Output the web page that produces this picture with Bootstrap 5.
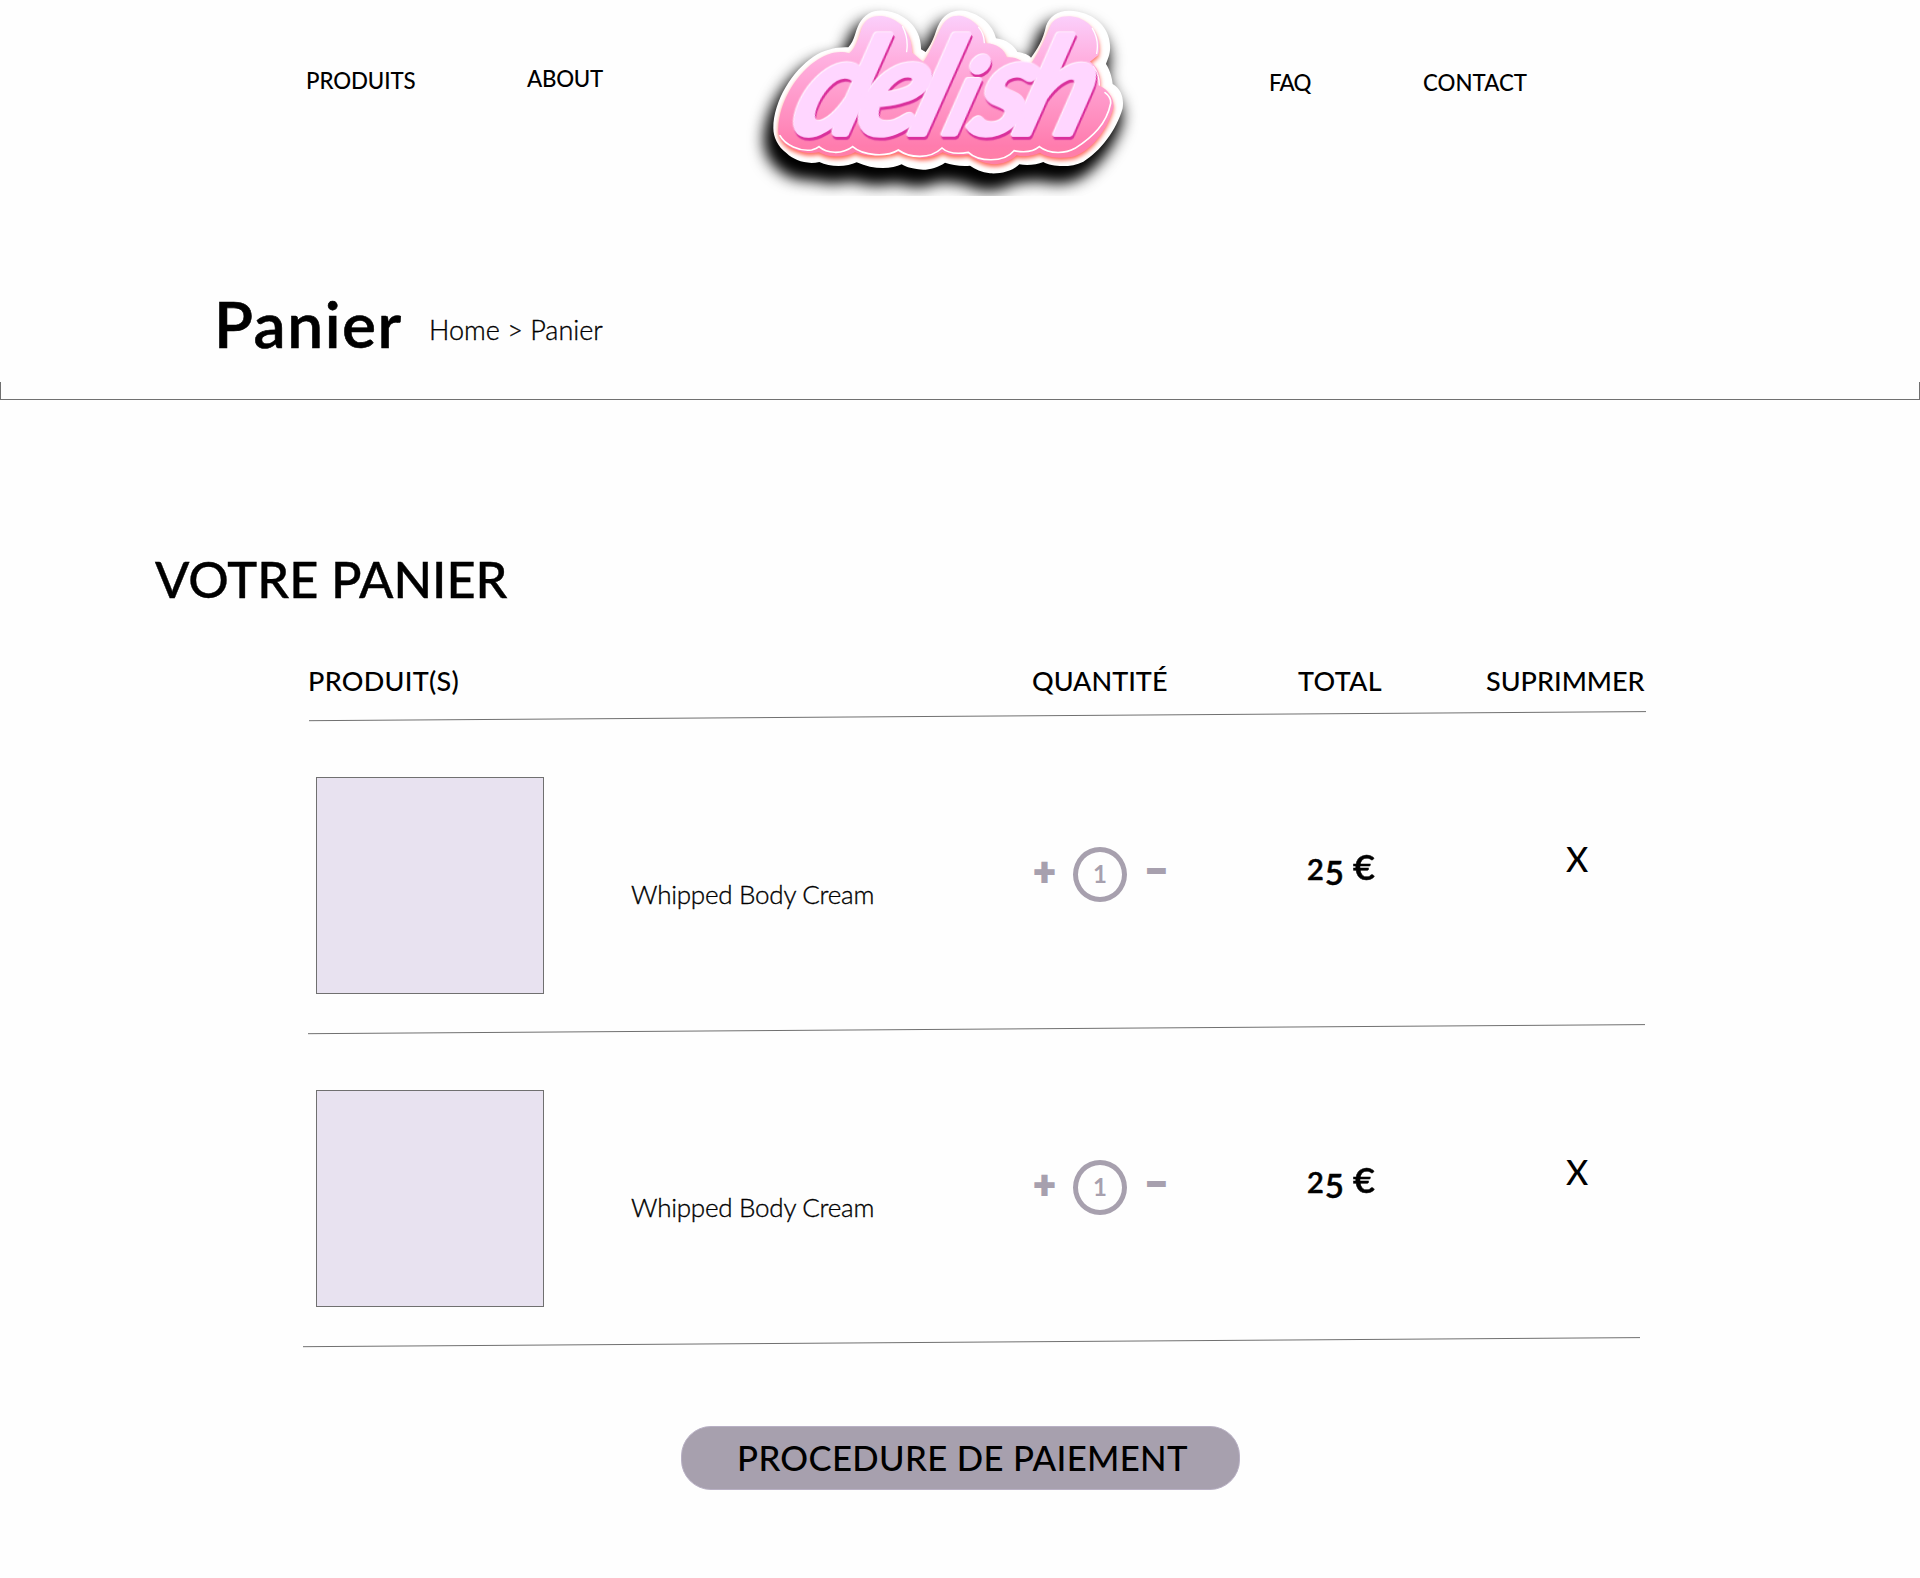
<!DOCTYPE html>
<html lang="fr">
<head>
<meta charset="utf-8">
<meta name="viewport" content="width=device-width, initial-scale=1">
<title>Delish – Panier</title>
<link href="https://cdn.jsdelivr.net/npm/bootstrap@5.3.0/dist/css/bootstrap.min.css" rel="stylesheet">
<style>
body{font-family:Lato,"Open Sans",sans-serif;font-weight:500;color:#000;background:#fefefe;width:1920px;min-height:1578px;overflow-x:hidden}
a{color:#000;text-decoration:none}
.site-head{height:196px}
.site-head .nav-link{font-size:22.3px;line-height:24px;padding:0;color:#000;white-space:nowrap}
.nav-produits{margin:69px 0 0 306px;width:221px;letter-spacing:-.1px}
.nav-about{margin-top:67px;width:213px;letter-spacing:-.25px}
.brand-logo{width:400px;height:196px}
.nav-faq{margin:71px 0 0 129px;width:154px;letter-spacing:-.8px}
.nav-contact{margin-top:71px}
.page-head{height:186px;padding-left:214px}
.page-title{font-size:64px;line-height:76px;font-weight:600;letter-spacing:1.5px;margin:90px 0 0;width:215px;-webkit-text-stroke:.6px #000}
.crumbs{font-size:27px;line-height:32px;font-weight:300;margin-top:118px;-webkit-text-stroke:.35px #000}
.head-rule{height:18px;border:1px solid #707070;border-top:0}
.cart-title{font-size:50.5px;line-height:60px;font-weight:500;letter-spacing:0;margin:149px 0 0 155px;-webkit-text-stroke:.4px #000}
.cart-box{margin:56px 0 0 303px;width:1343px}
.cart-labels{font-size:27px;line-height:32px;height:46px;white-space:nowrap}
.cell-a{width:729px;padding-left:5px;letter-spacing:.3px}
.cell-q{width:266px}
.cell-t{width:188px;letter-spacing:.3px}
.rule-svg{display:block;width:1343px;height:11px}
.cart-item{height:302px}
.thumb{width:228px;height:217px;margin:55px 0 0 13px;background:#e8e2f0;border:1px solid #707070}
.item-name{width:488px;padding-left:87px;margin-top:156px;font-size:26px;line-height:32px;font-weight:300;letter-spacing:-.25px;white-space:nowrap;-webkit-text-stroke:.35px #000}
.stepper{color:#a7a0ae;width:266px;margin-top:125px;height:55px}
.step-btn{border:0;background:none;padding:0;color:inherit;font-weight:900;font-size:37px;line-height:40px;width:25px;-webkit-text-stroke:2px #a7a0ae}
.step-minus{font-size:41px;line-height:36px}
.qty{width:54px;height:55px;border:5px solid #a7a0ae;border-radius:50%;margin:0 17px 0 16px;font-weight:700;font-size:24px;line-height:44px;text-align:center}
.price{width:268px;padding-left:9px;margin-top:122px;font-size:37px;line-height:44px;font-weight:600;white-space:nowrap;-webkit-text-stroke:.5px #000}
.price .digit{font-size:29px}
.price .drop-digit{display:inline-block;transform:translateY(5px);font-size:33px;margin:0 1px}
.price .euro{font-size:34.5px;display:inline-block;transform:scaleX(1.1)}
.remove{border:0;background:none;padding:0;font-size:34px;line-height:40px;font-weight:500;margin-top:117px;color:#000}
.pay-btn{width:559px;height:64px;margin:78px 0 0 681px;border-radius:30px;background:#a7a0ae;border:1px solid #b8b0c4;font-size:34.7px;line-height:42px;font-weight:500;letter-spacing:.35px;color:#000;padding:0 0 0 4px}
.logo-word{font:italic 600 402px/1 Lato,sans-serif;fill:#ffd6ff;stroke:#ffd6ff;stroke-width:16;stroke-linejoin:round;filter:drop-shadow(-4px -3px 0 #fff3ff) drop-shadow(6px 9px 0 #d9309c)}
.logo-word .short{font-size:315px}
</style>
<script src="https://cdn.jsdelivr.net/npm/bootstrap@5.3.0/dist/js/bootstrap.bundle.min.js"></script>
</head>
<body>
<header class="site-head d-flex align-items-start">
  <a class="nav-link nav-produits" href="#">PRODUITS</a>
  <a class="nav-link nav-about" href="#">ABOUT</a>
  <a href="#" class="brand-logo d-block" aria-label="delish">
    <svg class="d-block" width="400" height="196" viewBox="0 0 1200 588">
      <defs>
        <linearGradient id="pink" x1="0" y1="45" x2="0" y2="480" gradientUnits="userSpaceOnUse">
          <stop offset="0" stop-color="#fbd0fc"/><stop offset=".3" stop-color="#ffb0e0"/><stop offset=".7" stop-color="#ff8fc0"/><stop offset=".9" stop-color="#ff7cae"/><stop offset="1" stop-color="#ff7fa6"/>
        </linearGradient>
        <filter id="soft" x="-20%" y="-20%" width="140%" height="150%"><feGaussianBlur stdDeviation="25"/></filter>
        <filter id="glow" x="-10%" y="-10%" width="120%" height="120%"><feGaussianBlur stdDeviation="7"/></filter>
        <filter id="edge"><feGaussianBlur stdDeviation="1.6"/></filter>
        <path id="blob" d="M100 385C100 300 160 210 220 170C250 150 290 140 325 142C345 120 345 95 357 72C375 40 400 28 435 32C490 38 545 80 543 148L557 156C580 125 585 100 593 80C610 40 640 28 672 32C720 40 760 75 768 115C800 118 825 140 832 156C850 158 868 165 873 173C890 150 910 120 918 78C930 45 960 28 1000 33C1070 40 1115 90 1110 150C1108 170 1100 185 1098 192C1112 215 1116 235 1118 252C1145 268 1152 295 1148 325C1130 390 1080 455 1030 485C990 505 935 500 910 486C890 495 860 497 838 493C815 515 780 522 750 520C725 516 705 508 690 497C665 500 635 495 615 488C590 505 560 512 535 508C510 504 495 500 485 493C455 508 400 510 350 487C320 502 270 502 238 486C200 495 160 480 140 460C112 440 100 410 100 385Z"/>
        <path id="body" d="M115 385C118 300 175 215 235 178C265 158 300 150 328 160C350 140 355 115 365 85C375 58 395 46 425 48C475 55 515 90 517 158L550 186C575 150 585 115 605 80C620 52 640 45 665 48C705 58 735 95 738 130C770 130 795 150 800 172C830 168 850 185 865 202C890 170 915 120 930 80C940 55 965 46 1000 50C1055 58 1090 115 1075 165L1050 185C1075 200 1085 235 1080 258C1105 270 1124 295 1120 325C1100 395 1050 455 1000 470C960 477 920 472 900 458C880 467 850 472 830 466C800 495 760 497 730 487C710 480 695 472 685 464C650 470 625 466 608 457C580 475 545 477 520 470C500 467 485 462 475 457C440 470 380 472 345 457C310 475 265 473 237 457C200 465 160 450 140 435C122 420 113 405 115 385Z"/>
      </defs>
      <use href="#blob" transform="translate(-22 42)" fill="#000" filter="url(#soft)"/>
      <use href="#blob" transform="translate(-8 36)" fill="#000" filter="url(#soft)"/>
      <use href="#blob" fill="#fff"/>
      <use href="#body" fill="#ff6a5c" transform="translate(0 8)" filter="url(#glow)"/>
      <use href="#body" fill="url(#pink)" filter="url(#edge)"/>
      <g fill="none" stroke="#fff" stroke-width="5" stroke-linecap="round">
        <path d="M120 407C135 435 180 455 215 450Q230 446 237 440C260 460 305 465 338 440C370 468 440 472 475 450C510 475 570 478 606 444C625 462 655 462 685 457C715 485 790 490 822 452C850 458 880 455 898 440C930 465 980 460 1005 445C1060 410 1100 370 1112 310C1113 295 1105 285 1095 278"/>
        <path d="M488 80Q506 115 500 155M716 82Q732 100 733 128M1057 85Q1078 120 1070 160M1060 200Q1078 225 1078 255" stroke-width="4"/>
      </g>
      <g transform="translate(0 402) skewX(-18)">
        <text class="logo-word" y="0"><tspan x="144">d</tspan><tspan x="334">e</tspan><tspan x="500">l</tspan><tspan class="short" x="604">i</tspan><tspan x="682">s</tspan><tspan x="814">h</tspan></text>
      </g>
    </svg>
  </a>
  <a class="nav-link nav-faq" href="#">FAQ</a>
  <a class="nav-link nav-contact" href="#">CONTACT</a>
</header>

<section class="page-head d-flex align-items-start">
  <h1 class="page-title">Panier</h1>
  <nav class="crumbs"><a href="#">Home</a> &gt; <span>Panier</span></nav>
</section>
<div class="head-rule"></div>

<main>
  <h2 class="cart-title">VOTRE PANIER</h2>
  <div class="cart-box">
    <div class="cart-labels d-flex">
      <div class="cell-a">PRODUIT(S)</div><div class="cell-q">QUANTITÉ</div><div class="cell-t">TOTAL</div><div>SUPRIMMER</div>
    </div>
    <svg class="rule-svg" viewBox="0 0 1343 11"><path d="M6 9.7L1343 .6" stroke="#707070"/></svg>
    <div class="cart-item d-flex align-items-start">
      <div class="thumb"></div>
      <div class="item-name">Whipped Body Cream</div>
      <div class="stepper d-flex align-items-start">
        <button class="step-btn mt-1">+</button><div class="qty">1</div><button class="step-btn step-minus mt-1">–</button>
      </div>
      <div class="price"><span class="digit">2</span><span class="drop-digit">5</span> <span class="euro">€</span></div>
      <button class="remove">X</button>
    </div>
    <svg class="rule-svg" viewBox="0 0 1343 11"><path d="M5 9.7L1342 .6" stroke="#707070"/></svg>
    <div class="cart-item d-flex align-items-start">
      <div class="thumb"></div>
      <div class="item-name">Whipped Body Cream</div>
      <div class="stepper d-flex align-items-start">
        <button class="step-btn mt-1">+</button><div class="qty">1</div><button class="step-btn step-minus mt-1">–</button>
      </div>
      <div class="price"><span class="digit">2</span><span class="drop-digit">5</span> <span class="euro">€</span></div>
      <button class="remove">X</button>
    </div>
    <svg class="rule-svg" viewBox="0 0 1343 11"><path d="M0 9.7L1337 .6" stroke="#707070"/></svg>
  </div>
  <button class="pay-btn btn">PROCEDURE DE PAIEMENT</button>
</main>
</body>
</html>
